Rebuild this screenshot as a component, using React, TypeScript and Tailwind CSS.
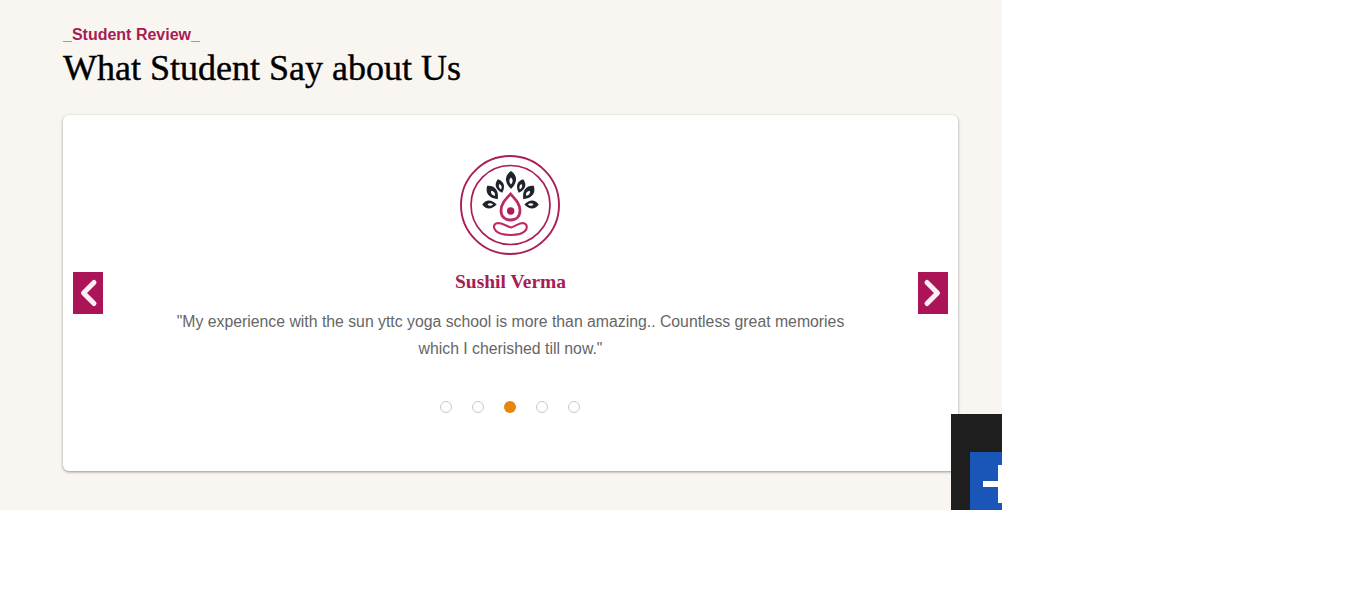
const Leaf = ({ x, y, r, s = 1 }: { x: number; y: number; r: number; s?: number }) => (
  <g transform={`translate(${x} ${y}) rotate(${r}) scale(${s})`}>
    <path d="M0 -9 C6.500 -4.500 7 2 0 9 C-7 2 -6.500 -4.500 0 -9Z" fill="#20232b" />
    <path d="M0 -2.500 C2.200 -0.500 2.200 2 0 4.500 C-2.200 2 -2.200 -0.500 0 -2.500Z" fill="#fff" />
  </g>
);

const Logo = () => (
  <svg width="100" height="100" viewBox="0 0 100 100" className="mr-[1px] block">
    <circle cx="50" cy="50" r="49" fill="#fff" stroke="#ab1c58" strokeWidth="1.9" />
    <circle cx="50.500" cy="50" r="39.500" fill="none" stroke="#ab1c58" strokeWidth="1.700" />
    <Leaf x={51} y={25} r={0} s={1} />
    <Leaf x={40} y={31} r={-18} s={0.8} />
    <Leaf x={61} y={31} r={18} s={0.8} />
    <Leaf x={32.500} y={37.500} r={-38} s={0.95} />
    <Leaf x={68.500} y={37.500} r={38} s={0.95} />
    <Leaf x={29.500} y={49.500} r={-90} s={0.8} />
    <Leaf x={71.500} y={49.500} r={90} s={0.8} />
    <path d="M50.500 39 C56 45 60 49 60 55.500 C60 61.500 56 65 50.500 65 C45 65 41 61.500 41 55.500 C41 49 45 45 50.500 39Z" fill="#fff" stroke="#bd2a62" strokeWidth="2.800" />
    <circle cx="50.700" cy="56" r="3.700" fill="#ab1c58" />
    <path d="M38 68 C33 68.500 33 73 36 76 C41 81 60 81.500 65 76 C68 73 67 68.500 63 68 C59 68 56 71 51 72.500 C46 71 42 68 38 68Z" fill="none" stroke="#bd2a62" strokeWidth="2.100" />
  </svg>
);

const Arrow = ({ left }: { left?: boolean }) => (
  <button className="flex h-[42px] w-[30px] items-center justify-center bg-[#ab1558]">
    <svg width="22" height="30" viewBox="0 0 22 30" fill="none">
      <path d={left ? "M17 4.500 L6.500 15 L17 25.500" : "M5 4.500 L15.500 15 L5 25.500"} stroke="#fbeef4" strokeWidth="5" strokeLinecap="round" strokeLinejoin="round" />
    </svg>
  </button>
);

export default function App() {
  return (
    <div className="min-h-[601px] bg-white">
      <section className="relative h-[510px] w-[1002px] overflow-hidden bg-[#f9f6f2] px-[63px] pt-[26px]">
        <p className="font-['Liberation_Sans',sans-serif] text-[16px] leading-[18px] font-bold text-[#a81c54]">_Student Review_</p>
        <h2 className="mt-[2px] font-['Liberation_Serif',serif] text-[36px] leading-[44px] font-normal text-black [-webkit-text-stroke:0.4px_black]">What Student Say about Us</h2>
        <div className="mt-[25px] flex h-[356px] w-[895px] items-center justify-between rounded-[6px] bg-white px-[10px] shadow-[0_1px_3px_rgba(0,0,0,0.4)]">
          <Arrow left />
          <div className="flex h-full flex-1 flex-col items-center pt-[40px]">
            <Logo />
            <h3 className="mt-[15px] font-['Liberation_Serif',serif] text-[19.5px] leading-[24px] font-bold text-[#a81c54]">Sushil Verma</h3>
            <p className="mt-[14px] w-[690px] text-center font-['Liberation_Sans',sans-serif] text-[15.8px] leading-[27px] text-[#666666]">
              "My experience with the sun yttc yoga school is more than amazing.. Countless great memories which I cherished till now."
            </p>
            <div className="mt-[39px] mr-[1px] flex gap-[20px]">
              <span className="h-3 w-3 rounded-full border border-[#c9c9c9] bg-white" />
              <span className="h-3 w-3 rounded-full border border-[#c9c9c9] bg-white" />
              <span className="h-3 w-3 rounded-full bg-[#e8850f]" />
              <span className="h-3 w-3 rounded-full border border-[#c9c9c9] bg-white" />
              <span className="h-3 w-3 rounded-full border border-[#c9c9c9] bg-white" />
            </div>
          </div>
          <Arrow />
        </div>
        <div className="absolute top-[414px] left-[951px] h-[96px] w-[51px] bg-[#1e1e1e]">
          <div className="absolute top-[38px] left-[19px] h-[58px] w-[32px] bg-[#1a56b8]">
            <div className="absolute top-[29px] left-[13px] h-[6px] w-[19px] bg-white" />
            <div className="absolute top-[13px] left-[28px] h-[38px] w-[4px] bg-white" />
          </div>
        </div>
      </section>
    </div>
  );
}
